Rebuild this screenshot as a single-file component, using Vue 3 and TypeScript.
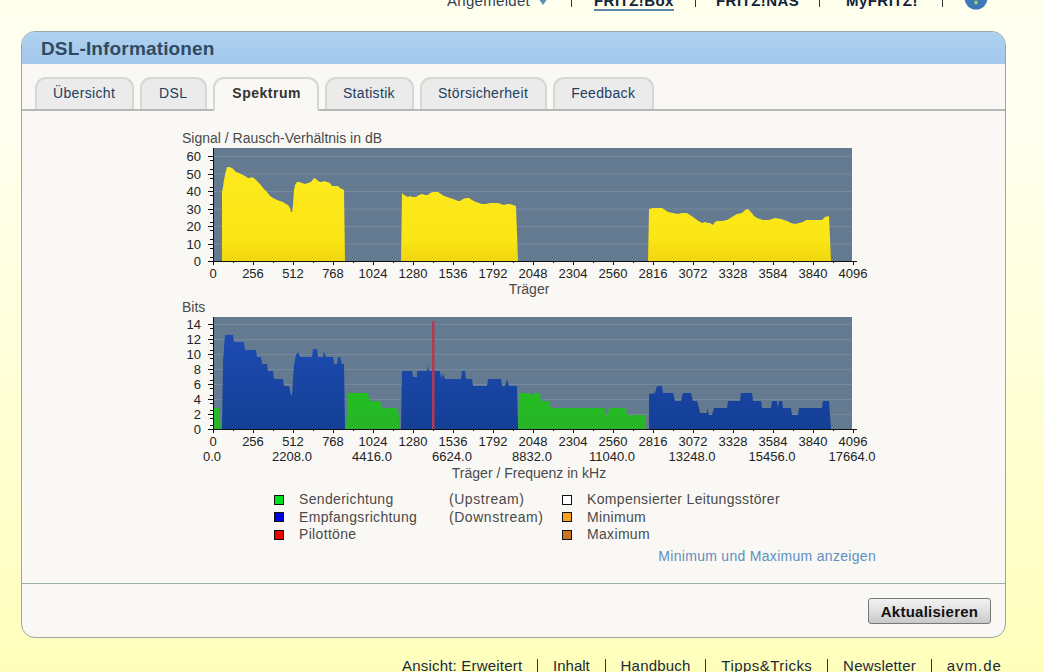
<script setup lang="ts">
const xTicks = Array.from({ length: 17 }, (_, i) => i * 256)
const xMinor = Array.from({ length: 33 }, (_, i) => i)
const freq = [0, 2208, 4416, 6624, 8832, 11040, 13248, 15456, 17664]
const tabs = ['Übersicht', 'DSL', 'Spektrum', 'Statistik', 'Störsicherheit', 'Feedback']
const footer = ['Ansicht: Erweitert', 'Inhalt', 'Handbuch', 'Tipps&Tricks', 'Newsletter', 'avm.de']

const snr1 = '222,261 222,192 223,187 224,180 225,175 227,167 229,167 232,168 234,170 236,172 239,173 241,174 245,176 248,178 250,178 252,177 255,179 257,181 260,184 263,188 267,192 270,196 273,198 277,200 280,201 283,202 286,204 288,205 290,208 291,212 292,212 293,205 294,190 295,185 297,182 299,182 302,183 305,184 308,183 311,182 314,178 316,179 318,181 320,182 322,182 324,181 327,182 330,183 332,186 335,186 338,186 340,188 344,190 345,261'
const snr2 = '401,261 402,193 404,195 406,196 408,197 410,196 412,197 416,197 419,195 422,194 425,195 428,195 430,193 433,192 436,192 438,192 441,194 444,196 447,197 450,198 453,199 456,200 458,201 460,201 463,199 466,198 469,198 472,200 476,202 479,203 482,204 486,204 490,203 494,203 498,203 501,204 504,205 507,204 510,204 513,205 516,206 518,261'
const snr3 = '648,261 649,209 653,208 657,208 662,208 665,210 668,212 673,213 678,214 682,213 687,213 690,215 693,217 697,220 702,223 705,222 708,223 710,223 713,225 715,222 717,221 722,221 727,220 732,217 737,214 742,213 745,210 748,209 751,212 754,216 757,218 763,220 769,220 775,218 781,219 787,221 791,223 795,224 799,223 803,222 806,220 810,220 816,220 822,220 825,217 829,216 831,261'

const up1 = '213,429 213,408 219,408 221,429 222,429'
const up2 = '346,429 348,393 368,393 370,401 380,401 382,408 397,408 399,416 400,429'
const up3 = '518,429 519,393 530,393 531,395 533,395 534,393 540,393 541,401 549,401 551,408 605,408 605,415 608,415 609,408 626,408 627,415 645,415 646,429'
const down1 = '222,429 223,361 225,335 233,335 234,342 244,342 245,350 256,350 257,357 261,357 262,364 267,364 268,371 273,371 274,379 283,379 284,386 289,386 291,395 292,395 294,365 296,355 298,352 300,357 312,357 313,349 317,349 318,357 323,357 324,351 326,357 333,357 334,364 337,364 338,357 340,357 342,364 344,364 345,429'
const down2 = '401,429 402,371 412,371 413,377 417,377 417,371 427,371 428,366 429,371 440,371 441,378 443,374 445,379 461,379 462,371 465,371 466,379 472,379 473,386 487,386 488,379 501,379 502,386 505,386 507,379 509,386 517,386 518,429'
const down3 = '649,429 649,394 655,393 657,386 662,386 663,393 673,393 675,401 681,401 683,393 691,393 693,401 697,401 699,408 700,413 707,413 707,408 709,415 712,415 714,408 727,408 728,401 740,401 741,393 752,393 753,401 761,401 762,408 771,408 772,401 777,401 778,408 779,401 782,401 783,408 791,408 792,415 798,415 799,408 822,408 823,401 829,401 831,429'
</script>

<template>
  <div class="page">
    <header class="topbar">
      <span class="user">Angemeldet<svg class="heart" width="10" height="8" viewBox="0 0 10 8"><path d="M0 0 H10 L5 7 Z" fill="#5f8fbf" /></svg></span>
      <i class="pipe p1"></i>
      <a class="nav n1 current">FRITZ!Box</a>
      <i class="pipe p2"></i>
      <a class="nav n2">FRITZ!NAS</a>
      <i class="pipe p3"></i>
      <a class="nav n3">MyFRITZ!</a>
      <i class="pipe p4"></i>
      <svg class="globe" width="24" height="24" viewBox="0 0 24 24">
        <circle cx="12" cy="12" r="11.5" fill="#3f78b8" />
        <path d="M10.5 9 h3 v4 h-3 z" fill="#e2d23c" />
        <circle cx="12" cy="16.5" r="2" fill="#9bc46a" />
      </svg>
    </header>

    <main class="panel">
      <h1 class="title">DSL-Informationen</h1>
      <nav class="tabs">
        <a v-for="t in tabs" :key="t" class="tab" :class="{ active: t === 'Spektrum' }">{{ t }}</a>
      </nav>

      <section class="content">
        <svg class="chart" width="720" height="352" viewBox="170 129 720 352">
          <defs>
            <linearGradient id="yel" gradientUnits="userSpaceOnUse" x1="0" y1="170" x2="0" y2="261">
              <stop offset="0" stop-color="#fdea1e" />
              <stop offset="0.75" stop-color="#fbe615" />
              <stop offset="1" stop-color="#f2d60f" />
            </linearGradient>
            <linearGradient id="blu" gradientUnits="userSpaceOnUse" x1="0" y1="330" x2="0" y2="429">
              <stop offset="0" stop-color="#1e4cb4" />
              <stop offset="1" stop-color="#143f96" />
            </linearGradient>
            <linearGradient id="grn" gradientUnits="userSpaceOnUse" x1="0" y1="390" x2="0" y2="429">
              <stop offset="0" stop-color="#22c022" />
              <stop offset="1" stop-color="#28b428" />
            </linearGradient>
          </defs>

          <text x="182" y="143" class="lbl">Signal / Rausch-Verhältnis in dB</text>
          <rect x="213" y="148" width="639" height="113" fill="#647a90" />
          <g stroke="#74899d" stroke-width="1">
            <path v-for="d in 6" :key="d" :d="`M213 ${261.5 - d * 17.5} H852`" />
          </g>
          <polygon :points="snr1" fill="url(#yel)" />
          <polygon :points="snr2" fill="url(#yel)" />
          <polygon :points="snr3" fill="url(#yel)" />
          <g class="axis">
            <path d="M213 148 V261 M208 261 H857" />
            <path v-for="d in 7" :key="d" :d="`M208 ${261.5 - (d - 1) * 17.5} H213`" />
            <path v-for="d in 12" :key="d" :d="`M210 ${261.5 - (d - 0.5) * 8.75} H213`" />
            <path v-for="t in xTicks" :key="t" :d="`M${213.5 + t / 6.4} 261 V265`" />
            <path v-for="m in xMinor" :key="m" :d="`M${213.5 + m * 20} 261 V263`" />
          </g>
          <text v-for="d in 7" :key="d" x="201" :y="266 - (d - 1) * 17.5" class="num end">{{ (d - 1) * 10 }}</text>
          <text v-for="t in xTicks" :key="t" :x="213 + t / 6.4" y="278" class="num mid">{{ t }}</text>
          <text x="529" y="294" class="lbl mid">Träger</text>

          <text x="182" y="312" class="lbl">Bits</text>
          <rect x="213" y="317" width="639" height="112" fill="#647a90" />
          <g stroke="#74899d" stroke-width="1">
            <path v-for="d in 7" :key="d" :d="`M213 ${429.5 - d * 15} H852`" />
          </g>
          <polygon :points="up1" fill="url(#grn)" />
          <polygon :points="up2" fill="url(#grn)" />
          <polygon :points="up3" fill="url(#grn)" />
          <polygon :points="down1" fill="url(#blu)" />
          <polygon :points="down2" fill="url(#blu)" />
          <polygon :points="down3" fill="url(#blu)" />
          <rect x="432" y="321" width="2.5" height="108" fill="#b23a55" />
          <g class="axis">
            <path d="M213 317 V429 M208 429 H857" />
            <path v-for="d in 8" :key="d" :d="`M208 ${429.5 - (d - 1) * 15} H213`" />
            <path v-for="d in 14" :key="d" :d="`M210 ${429.5 - (d - 0.5) * 7.5} H213`" />
            <path v-for="t in xTicks" :key="t" :d="`M${213.5 + t / 6.4} 429 V433`" />
            <path v-for="m in xMinor" :key="m" :d="`M${213.5 + m * 20} 429 V431`" />
          </g>
          <text v-for="d in 8" :key="d" x="201" :y="434 - (d - 1) * 15" class="num end">{{ (d - 1) * 2 }}</text>
          <text v-for="t in xTicks" :key="t" :x="213 + t / 6.4" y="446" class="num mid">{{ t }}</text>
          <text v-for="(f, i) in freq" :key="f" :x="212 + i * 80" y="461" class="num mid">{{ f.toFixed(1) }}</text>
          <text x="529" y="478" class="lbl mid">Träger / Frequenz in kHz</text>
        </svg>

        <div class="legend">
          <div class="lcol name">
            <div><b class="sw up"></b>Senderichtung</div>
            <div><b class="sw down"></b>Empfangsrichtung</div>
            <div><b class="sw pilot"></b>Pilottöne</div>
          </div>
          <div class="lcol dir">
            <div>(Upstream)</div>
            <div>(Downstream)</div>
          </div>
          <div class="lcol">
            <div><b class="sw comp"></b>Kompensierter Leitungsstörer</div>
            <div><b class="sw min"></b>Minimum</div>
            <div><b class="sw max"></b>Maximum</div>
          </div>
        </div>
        <a class="toggle">Minimum und Maximum anzeigen</a>
      </section>

      <footer class="actions">
        <button class="btn" type="button">Aktualisieren</button>
      </footer>
    </main>

    <footer class="links">
      <template v-for="(l, i) in footer" :key="l">
        <i v-if="i" class="sep"></i>
        <a>{{ l }}</a>
      </template>
    </footer>
  </div>
</template>

<style>
html, body { margin: 0; height: 100%; overflow: hidden; }
</style>

<style scoped>
.page {
  width: 1044px;
  height: 672px;
  overflow: hidden;
  background: linear-gradient(#ffffee 0, #fffff0 120px, #ffffbc 672px);
  font-family: "Liberation Sans", Arial, sans-serif;
  color: #444;
}
.topbar {
  height: 31px;
  box-sizing: border-box;
  display: flex;
  align-items: flex-start;
  padding-left: 447px;
  font-size: 15px;
  line-height: 18px;
  overflow: hidden;
}
.topbar > * { margin-top: -8px; }
.user {
  width: 124px;
  flex: none;
  white-space: nowrap;
  color: #33414e;
  letter-spacing: 0.3px;
}
.heart { margin-left: 8px; }
.pipe { width: 1px; height: 14px; background: #333; flex: none; margin-top: -7px; }
.nav {
  font-weight: bold;
  white-space: nowrap;
  color: #0f2236;
  letter-spacing: 0.45px;
  flex: none;
}
.n1 { margin-left: 22px; width: 80px; }
.n2 { margin-left: 20px; width: 83px; }
.n3 { margin-left: 26px; width: 71px; }
.p2 { margin-left: 21px; }
.p3 { margin-left: 20px; }
.p4 { margin-left: 25px; }
.current { border-bottom: 2px solid #5c85a8; height: 17px; }
.globe { flex: none; margin-top: -14px; margin-left: 21px; }

.panel {
  width: 985px;
  height: 607px;
  margin-left: 21px;
  box-sizing: border-box;
  border: 1px solid #9aa6a4;
  border-radius: 14px;
  background: #f9f8f4;
  overflow: hidden;
  display: flex;
  flex-direction: column;
}
.title {
  margin: 0;
  height: 32px;
  flex: none;
  box-sizing: border-box;
  padding-left: 19px;
  font-size: 19px;
  letter-spacing: 0.15px;
  line-height: 34px;
  color: #2f4a63;
  background: linear-gradient(#aed1f1, #a3c8ea);
}
.tabs {
  flex: none;
  height: 47px;
  box-sizing: border-box;
  display: flex;
  align-items: flex-end;
  gap: 6px;
  padding-left: 13px;
  border-bottom: 2px solid #b6b9b6;
}
.tab {
  height: 32px;
  box-sizing: border-box;
  padding: 0 17px 0 16px;
  border: 2px solid #d6d6d3;
  border-bottom: 0;
  border-radius: 11px 11px 0 0;
  background: #ebebeb;
  font-size: 14px;
  letter-spacing: 0.33px;
  line-height: 28px;
  color: #1f3d5e;
}
.tab:nth-child(2) { padding: 0 18px 0 17px; }
.tab.active {
  height: 34px;
  margin-bottom: -2px;
  padding: 0 16px 0 17px;
  background: #f9f8f4;
  font-weight: bold;
  letter-spacing: 0.5px;
  color: #333;
}
.content {
  flex: 1;
  min-height: 0;
  padding-top: 18px;
}
.chart { display: block; margin-left: 148px; }
.lbl { font-size: 14px; fill: #4a4a4a; }
.num { font-size: 13px; fill: #222; }
.end { text-anchor: end; }
.mid { text-anchor: middle; }
.axis path { stroke: #111; stroke-width: 1; fill: none; shape-rendering: crispEdges; }
.legend {
  display: flex;
  margin: 10px 0 0 252px;
  font-size: 14px;
  letter-spacing: 0.33px;
  line-height: 17.5px;
  color: #4a4a4a;
}
.lcol > div { display: flex; align-items: center; white-space: nowrap; }
.name { width: 175px; }
.dir { width: 113px; letter-spacing: 0.55px; }
.sw {
  width: 8px;
  height: 8px;
  border: 1px solid #111;
  margin-right: 15px;
  flex: none;
}
.up { background: #00e020; }
.down { background: #0000e6; }
.pilot { background: #f00000; }
.comp { background: #ffffff; }
.min { background: #f8a020; }
.max { background: #c87820; }
.toggle {
  display: block;
  margin: 3.5px 0 0;
  padding-right: 129px;
  text-align: right;
  font-size: 14px;
  letter-spacing: 0.3px;
  line-height: 18px;
  color: #5f8fc0;
}
.actions {
  flex: none;
  height: 54px;
  box-sizing: border-box;
  border-top: 1px solid #9db0a4;
  display: flex;
  justify-content: flex-end;
  align-items: flex-start;
  padding: 14px 14px 0 0;
}
.btn {
  width: 123px;
  height: 26px;
  padding: 0;
  border: 1px solid #777;
  border-radius: 3px;
  background: linear-gradient(#f2f2f2, #dcdcdc 60%, #c8c8c8);
  font: bold 15px "Liberation Sans", Arial, sans-serif;
  letter-spacing: 0.25px;
  color: #111;
}
.links {
  margin-top: 19px;
  padding-left: 402px;
  display: flex;
  align-items: center;
  font-size: 15px;
  letter-spacing: 0.2px;
  line-height: 18px;
  color: #1a2a3a;
}
.links a { white-space: nowrap; }
.links a:nth-of-type(2) { letter-spacing: 0; }
.links a:nth-of-type(4) { letter-spacing: 0.45px; }
.links a:nth-of-type(6) { letter-spacing: 1px; }
.sep { width: 1px; height: 14px; background: #333; margin: 0 14.9px; flex: none; }
</style>
